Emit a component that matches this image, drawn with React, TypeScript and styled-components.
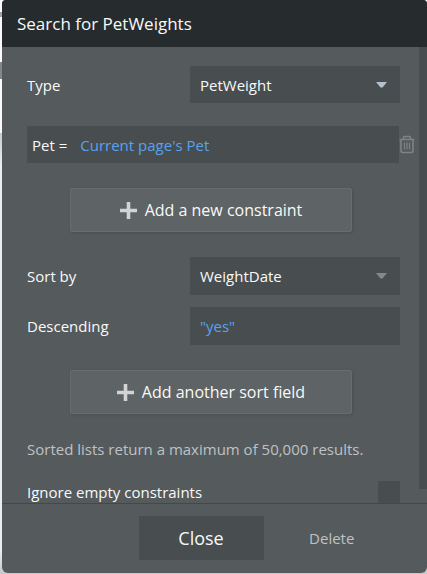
import React from "react";
import styled, { createGlobalStyle } from "styled-components";

const GlobalStyle = createGlobalStyle`
  *, *::before, *::after { box-sizing: border-box; }
  body {
    margin: 0;
    font-family: "Open Sans", "Noto Sans", sans-serif;
    font-size: 15px;
    line-height: 20px;
    color: #f8f9f9;
  }
  button, input, select { font: inherit; color: inherit; margin: 0; }
`;

const Page = styled.div`
  height: 100vh;
  padding: 0 0 1px 2px;
  background: linear-gradient(
    #fafafa 12px, #a2a3a3 12px, #a2a3a3 17px, #fafafa 17px, #fafafa 62px,
    #858686 62px, #858686 79px, #fafafa 79px, #fafafa 133px,
    #c9caca 133px, #eceeee 165px, #eceeee 550px, #c6c7c7 574px
  );
`;

const Dialog = styled.section`
  display: flex;
  flex-direction: column;
  height: 100%;
  overflow: hidden;
  border-radius: 4px 4px 6px 6px;
  background: #555a5d;
`;

const Header = styled.header`
  flex: none;
  padding: 12px 15px 11px;
  background: #262b2d;
`;

const Title = styled.h1`
  margin: 0;
  font-size: 17px;
  line-height: 24px;
  font-weight: 400;
`;

const Body = styled.div`
  flex: 1;
  min-height: 0;
  display: flex;
  overflow: hidden;
`;

const Form = styled.form`
  flex: 1;
  min-width: 0;
  padding: 19px 19px 0 25px;
`;

const ScrollThumb = styled.div`
  flex: none;
  width: 8px;
  height: 97%;
  background: #484d4f;
`;

const Row = styled.div<{ $gap?: number }>`
  display: grid;
  grid-template-columns: 163px 1fr;
  align-items: center;
  margin-bottom: ${(p) => p.$gap ?? 0}px;
`;

const SelectBox = styled.div`
  display: grid;
  align-items: center;

  > * { grid-area: 1 / 1; }
`;

const Select = styled.select<{ $height: number }>`
  appearance: none;
  width: 100%;
  height: ${(p) => p.$height}px;
  padding: 0 30px 0 10px;
  border: 0;
  border-radius: 1px;
  background: #484d4f;
`;

const Arrow = styled.svg<{ $dim?: boolean }>`
  justify-self: end;
  margin-right: 13px;
  pointer-events: none;
  fill: ${(p) => (p.$dim ? "#85898c" : "#b4c0ca")};
`;

const Expression = styled.input`
  width: 100%;
  min-width: 0;
  height: 38px;
  padding: 0 10px;
  border: 0;
  border-radius: 1px;
  background: #484d4f;
  color: #5aa2ee;
`;

const ConstraintRow = styled.div`
  display: flex;
  align-items: center;
  margin: 0 -15px 25px 0;
`;

const Constraint = styled.div`
  flex: 1;
  min-width: 0;
  display: flex;
  align-items: center;
  padding-left: 5px;
  border-radius: 1px;
  background: #484d4f;

  label { flex: none; }
  input { height: 37px; padding-left: 13px; }
`;

const IconButton = styled.button`
  flex: none;
  display: flex;
  padding: 0;
  border: 0;
  background: none;
  color: #7f8385;
`;

const AddButton = styled.button<{ $gap: number }>`
  display: flex;
  align-items: center;
  justify-content: center;
  gap: 8px;
  width: calc(100% - 91px);
  height: 44px;
  margin: 0 48px ${(p) => p.$gap}px 43px;
  padding: 0;
  border: 1px solid #676c6e;
  border-radius: 2px;
  background: #5e6365;
  box-shadow: 1px 1px 3px rgba(0, 0, 0, 0.12);
  font-size: 16px;
  line-height: 24px;
`;

const Note = styled.p`
  margin: 0 0 22px;
  color: #bfc2c3;
  white-space: nowrap;
`;

const CheckRow = styled.div`
  display: flex;
  align-items: center;
  justify-content: space-between;
`;

const Checkbox = styled.input`
  appearance: none;
  width: 22px;
  height: 22px;
  background: #484d4f;
`;

const Footer = styled.footer`
  flex: none;
  display: grid;
  grid-template-columns: 1fr 125px 1fr;
  align-items: center;
  height: 70px;
  padding: 0 27px 2px 0;
  border-top: 1px solid #43484a;
`;

const CloseButton = styled.button`
  grid-column: 2;
  height: 44px;
  border: 0;
  background: #484d4f;
  font-size: 18px;
`;

const DeleteButton = styled.button`
  justify-self: center;
  padding: 0;
  border: 0;
  background: none;
  color: #bfc2c3;
`;

const DownArrow = ({ dim }: { dim?: boolean }) => (
  <Arrow $dim={dim} width="11" height="6" viewBox="0 0 11 6" aria-hidden="true">
    <path d="M0 0h11L6.5 5.5h-2z" />
  </Arrow>
);

const Plus = () => (
  <svg width="17" height="17" viewBox="0 0 17 17" fill="#d2d3d3" aria-hidden="true">
    <path d="M6.7 0h3.6v6.7H17v3.6h-6.7V17H6.7v-6.7H0V6.7h6.7z" />
  </svg>
);

const Trash = () => (
  <svg width="16" height="19" viewBox="0 0 16 19" fill="none" stroke="currentColor" aria-hidden="true">
    <path d="M.5 4.5h15" strokeWidth="1.7" />
    <path d="M4.5 4V2.5q0-1 1-1h5q1 0 1 1V4M2 4.5v11.3q0 1.7 1.7 1.7h8.6q1.7 0 1.7-1.7V4.5" strokeWidth="1.6" />
    <path d="M5.5 7.5v7M8 7.5v7M10.5 7.5v7" strokeWidth="1.2" />
  </svg>
);

export default function App() {
  return (
    <>
      <GlobalStyle />
      <Page>
        <Dialog role="dialog" aria-labelledby="title">
          <Header>
            <Title id="title">Search for PetWeights</Title>
          </Header>
          <Body>
            <Form>
              <Row $gap={23}>
                <label htmlFor="type">Type</label>
                <SelectBox>
                  <Select id="type" $height={37}><option>PetWeight</option></Select>
                  <DownArrow />
                </SelectBox>
              </Row>
              <ConstraintRow>
                <Constraint>
                  <label htmlFor="pet">Pet =</label>
                  <Expression id="pet" defaultValue="Current page's Pet" />
                </Constraint>
                <IconButton type="button" aria-label="Remove constraint"><Trash /></IconButton>
              </ConstraintRow>
              <AddButton type="button" $gap={25}><Plus />Add a new constraint</AddButton>
              <Row $gap={12}>
                <label htmlFor="sort">Sort by</label>
                <SelectBox>
                  <Select id="sort" $height={38}><option>WeightDate</option></Select>
                  <DownArrow dim />
                </SelectBox>
              </Row>
              <Row $gap={25}>
                <label htmlFor="descending">Descending</label>
                <Expression id="descending" defaultValue={'"yes"'} />
              </Row>
              <AddButton type="button" $gap={25}><Plus />Add another sort field</AddButton>
              <Note>Sorted lists return a maximum of 50,000 results.</Note>
              <CheckRow>
                <label htmlFor="ignore">Ignore empty constraints</label>
                <Checkbox id="ignore" type="checkbox" />
              </CheckRow>
            </Form>
            <ScrollThumb />
          </Body>
          <Footer>
            <CloseButton type="button">Close</CloseButton>
            <DeleteButton type="button">Delete</DeleteButton>
          </Footer>
        </Dialog>
      </Page>
    </>
  );
}
